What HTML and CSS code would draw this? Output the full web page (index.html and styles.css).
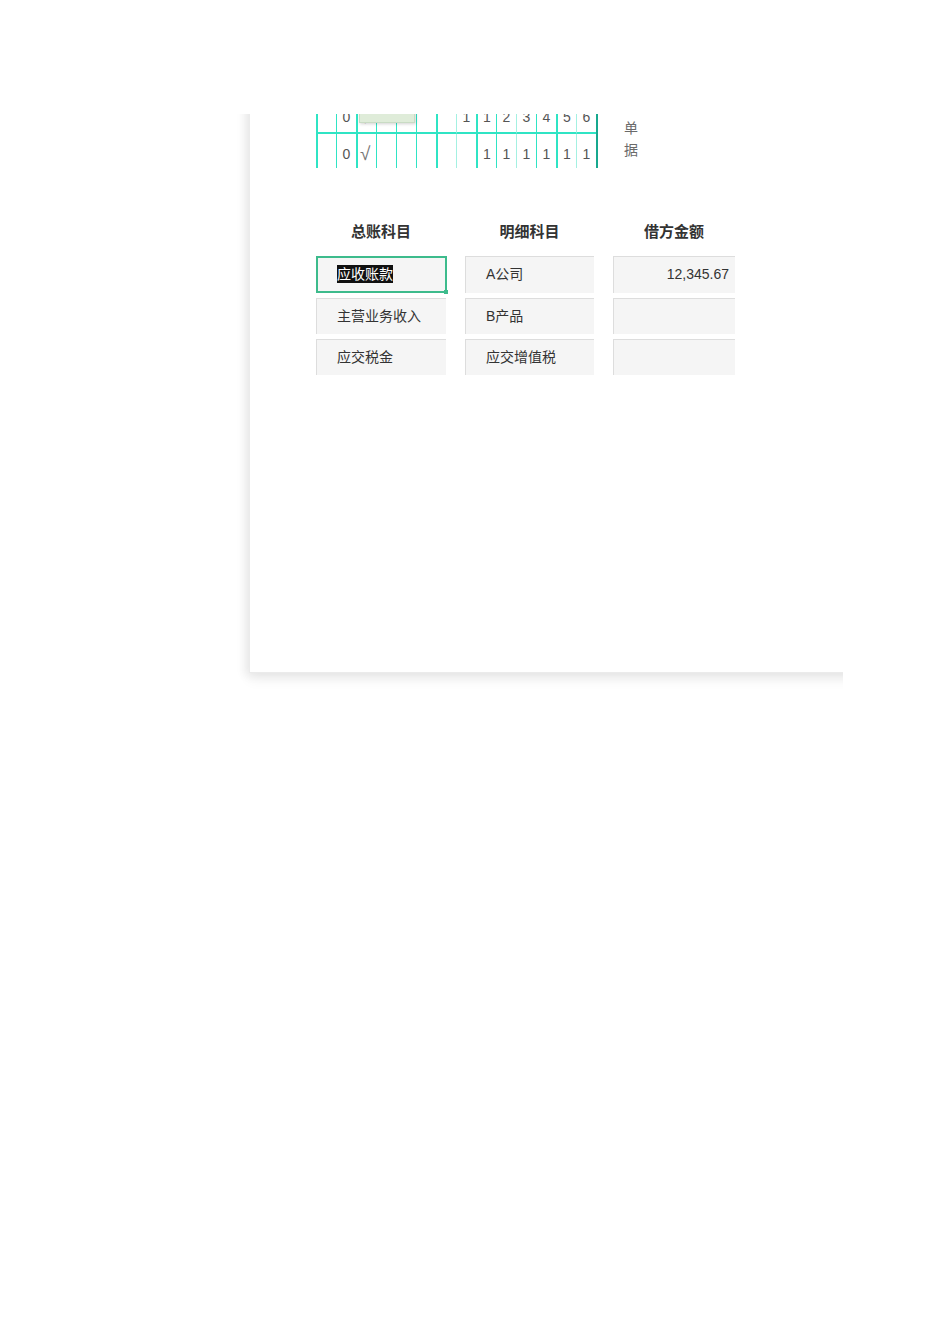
FILE: index.html
```html
<!DOCTYPE html>
<html lang="zh-CN">
<head>
<meta charset="utf-8">
<title>凭证</title>
<link rel="stylesheet" href="styles.css">
</head>
<body>
<div class="viewport">
  <div class="card">
    <div class="voucher">
      <div class="ledger">
        <div class="grid">
          <span></span><span>0</span><span class="chk">√</span><span></span><span></span><span></span><span></span><span>1</span><span>1</span><span>2</span><span>3</span><span>4</span><span>5</span><span>6</span>
          <span></span><span>0</span><span class="chk">√</span><span></span><span></span><span></span><span></span><span></span><span>1</span><span>1</span><span>1</span><span>1</span><span>1</span><span>1</span>
        </div>
        <div class="popup">√</div>
      </div>
      <div class="side">附<br>单<br>据</div>
    </div>

    <div class="entries">
      <div class="head">总账科目</div>
      <div class="head">明细科目</div>
      <div class="head">借方金额</div>

      <div class="cell selected"><span class="sel">应收账款</span></div>
      <div class="cell">A公司</div>
      <div class="cell num">12,345.67</div>

      <div class="cell">主营业务收入</div>
      <div class="cell">B产品</div>
      <div class="cell num"></div>

      <div class="cell">应交税金</div>
      <div class="cell">应交增值税</div>
      <div class="cell num"></div>
    </div>
  </div>
</div>
</body>
</html>
```

FILE: styles.css
```css
html, body {
  margin: 0;
  padding: 0;
  background: #ffffff;
}

body {
  font-family: "Liberation Sans", "Noto Sans CJK SC", sans-serif;
  color: #333333;
}

.viewport {
  margin: 114px 0 0 230px;
  width: 613px;
  height: 600px;
  overflow: hidden;
}

.card {
  margin-left: 19px;
  margin-top: -40px;
  width: 720px;
  height: 599px;
  box-sizing: border-box;
  background: #ffffff;
  border-left: 1px solid #ebebeb;
  border-bottom: 1px solid #ebebeb;
  box-shadow: 0 7px 12px rgba(0, 0, 0, 0.06), -5px 3px 9px rgba(0, 0, 0, 0.06);
  padding: 21px 0 0 66px;
}

.voucher {
  display: flex;
  align-items: flex-start;
  gap: 26px;
}

.ledger {
  position: relative;
}

.grid {
  display: grid;
  grid-template-columns: repeat(14, 20px);
  grid-template-rows: 39px 34px;
  border-right: 2px solid #17a88e;
  font-size: 14px;
  color: #555555;
}

.grid span {
  box-sizing: border-box;
  border-left: 1px solid #2fe4c4;
  text-align: center;
  line-height: 20px;
  padding-top: 10px;
}

.grid span:nth-child(-n+14) {
  border-bottom: 2px solid #2fe4c4;
  padding-top: 12px;
}

.grid span:nth-child(14n+1),
.grid span:nth-child(14n+3),
.grid span:nth-child(14n+7),
.grid span:nth-child(14n+9),
.grid span:nth-child(14n+13) {
  border-left-width: 2px;
}

.grid span:nth-child(14n+8),
.grid span:nth-child(14n+11),
.grid span:nth-child(14n+14) {
  border-left-color: #a4f1e2;
}

.grid .chk {
  font-size: 19px;
  color: #777777;
  text-align: left;
  padding-left: 2px;
}

.popup {
  position: absolute;
  left: 43px;
  top: -4px;
  width: 56px;
  height: 32px;
  box-sizing: border-box;
  background: #dfecd9;
  border: 1px solid #c9dbc4;
  box-shadow: 1px 1px 3px rgba(0, 0, 0, 0.18);
  font-size: 14px;
  color: #555555;
  padding: 0 0 0 6px;
  line-height: 16px;
}

.side {
  font-size: 14px;
  line-height: 22px;
  color: #6a6a6a;
}

.entries {
  display: grid;
  grid-template-columns: 130px 129px 122px;
  grid-template-rows: 29px 37px 36px 36px;
  column-gap: 19px;
  row-gap: 5px;
  margin-top: 54px;
}

.entries .head {
  text-align: center;
  font-size: 15px;
  font-weight: bold;
  line-height: 20px;
  color: #333333;
}

.cell {
  box-sizing: border-box;
  background: #f5f5f5;
  border-top: 1px solid #dddddd;
  border-left: 1px solid #dddddd;
  padding: 0 20px;
  font-size: 14px;
  line-height: 35px;
  color: #333333;
  white-space: nowrap;
}

.cell.num {
  text-align: right;
  padding-right: 6px;
}

.cell.selected {
  position: relative;
  border: 2px solid #3dbb8c;
  padding-left: 19px;
  line-height: 33px;
  margin-right: -1px;
}

.cell.selected::after {
  content: "";
  position: absolute;
  right: -3px;
  bottom: -3px;
  width: 4px;
  height: 4px;
  background: #3dbb8c;
}

.sel {
  background: #111111;
  color: #ffffff;
  padding: 1px 0;
}
```
